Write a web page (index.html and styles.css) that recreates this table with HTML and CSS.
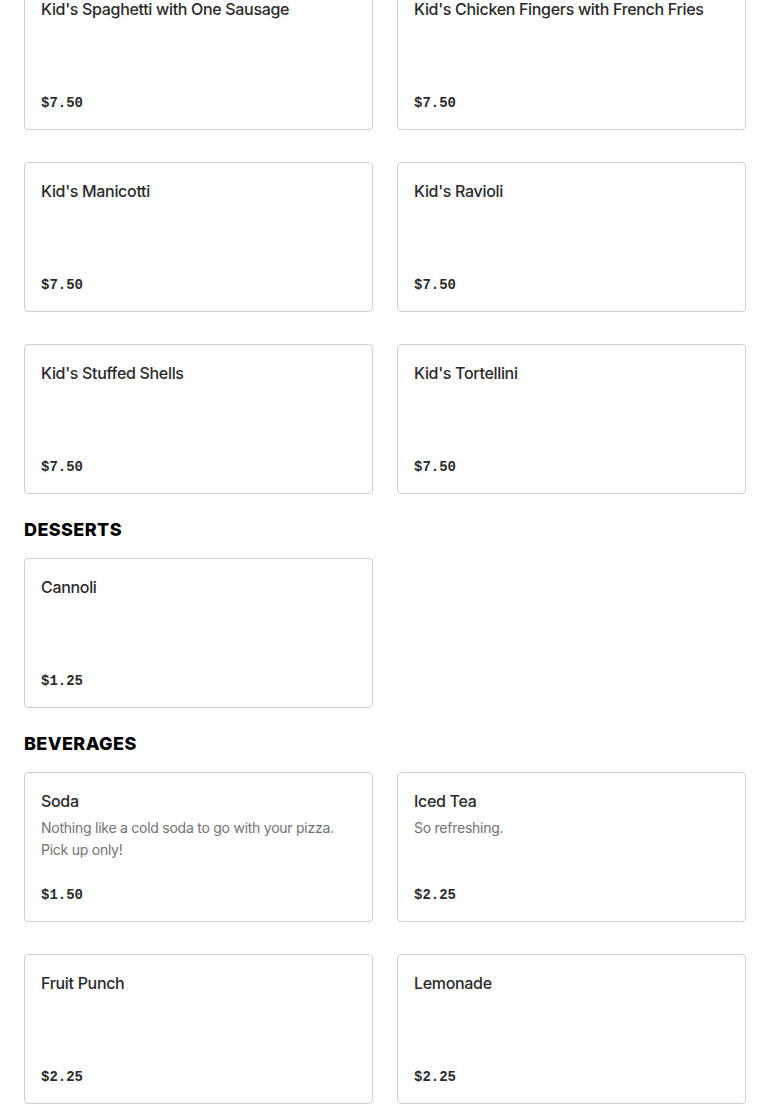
FILE: index.html
```html
<!DOCTYPE html>
<html>
<head>
<meta charset="utf-8">
<link rel="stylesheet" href="styles.css">
</head>
<body>
<main class="menu">
  <section class="section first">
    <div class="grid">
      <div class="card"><div class="title">Kid's Spaghetti with One Sausage</div><div class="price">$7.50</div></div>
      <div class="card"><div class="title">Kid's Chicken Fingers with French Fries</div><div class="price">$7.50</div></div>
      <div class="card"><div class="title">Kid's Manicotti</div><div class="price">$7.50</div></div>
      <div class="card"><div class="title">Kid's Ravioli</div><div class="price">$7.50</div></div>
      <div class="card"><div class="title">Kid's Stuffed Shells</div><div class="price">$7.50</div></div>
      <div class="card"><div class="title">Kid's Tortellini</div><div class="price">$7.50</div></div>
    </div>
  </section>
  <section class="section">
    <h2 class="heading">DESSERTS</h2>
    <div class="grid">
      <div class="card"><div class="title">Cannoli</div><div class="price">$1.25</div></div>
    </div>
  </section>
  <section class="section">
    <h2 class="heading">BEVERAGES</h2>
    <div class="grid">
      <div class="card"><div class="title">Soda</div><div class="desc">Nothing like a cold soda to go with your pizza. Pick up only!</div><div class="price">$1.50</div></div>
      <div class="card"><div class="title">Iced Tea</div><div class="desc">So refreshing.</div><div class="price">$2.25</div></div>
      <div class="card"><div class="title">Fruit Punch</div><div class="price">$2.25</div></div>
      <div class="card"><div class="title">Lemonade</div><div class="price">$2.25</div></div>
    </div>
  </section>
</main>
</body>
</html>
```
FILE: styles.css
```css
html, body {
  margin: 0;
  padding: 0;
  background: #fff;
}
body {
  font-family: "Inter", "Liberation Sans", sans-serif;
  color: #2a2a2a;
}
.menu {
  padding: 0 24px 40px;
  display: flex;
  flex-direction: column;
  gap: 24px;
}
.section.first {
  margin-top: -20px;
}
.heading {
  margin: 0 0 16px;
  font-family: "Inter", sans-serif;
  font-weight: 800;
  font-size: 18px;
  line-height: 24px;
  color: #000;
  letter-spacing: 0.4px;
}
.grid {
  display: grid;
  grid-template-columns: 1fr 1fr;
  column-gap: 24px;
  row-gap: 32px;
}
.card {
  box-sizing: border-box;
  min-height: 150px;
  border: 1px solid #cfcfcf;
  border-radius: 4px;
  padding: 16px 16px 16px;
  display: flex;
  flex-direction: column;
}
.title {
  font-size: 16px;
  line-height: 24px;
  font-weight: 500;
  color: #2a2a2a;
  letter-spacing: -0.32px;
}
.desc {
  margin-top: 4px;
  font-size: 14px;
  line-height: 22px;
  color: #727272;
  letter-spacing: -0.25px;
}
.price {
  margin-top: auto;
  font-family: "Liberation Mono", "DejaVu Sans Mono", monospace;
  font-weight: 700;
  font-size: 14px;
  line-height: 20px;
  color: #2a2a2a;
}
```
